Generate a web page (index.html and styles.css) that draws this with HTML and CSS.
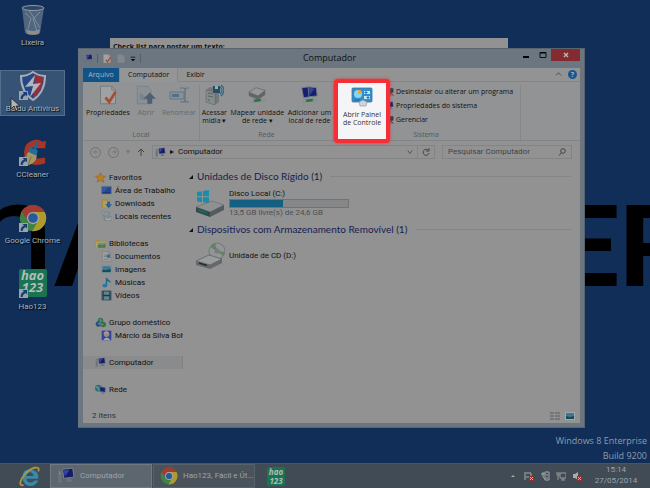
FILE: index.html
```html
<!DOCTYPE html>
<html lang="pt-BR">
<head>
<meta charset="utf-8">
<meta name="viewport" content="width=device-width, initial-scale=1">
<title>Computador</title>
<link rel="stylesheet" href="styles.css">
</head>
<body>
<svg class="defs" aria-hidden="true">
  <symbol id="pc" viewBox="0 0 16 16"><path d="M1 3h3v11H1z" fill="#68727a"/><path d="M2 5h1v1H2z" fill="#aab"/><path d="M5 2l9-1 1 8-9 1z" fill="#141b68" stroke="#7c868f" stroke-width=".8"/><path d="M6 3l5-.6-4 6.200z" fill="#3846a0"/><path d="M9 10h3l2 3H8z" fill="#6b747c"/></symbol>
  <symbol id="sheet" viewBox="0 0 16 16"><path d="M2 1h9l3 3v11H2z" fill="#a0a1a2" stroke="#6d7072" stroke-width=".6"/><path d="M11 1v3h3" fill="none" stroke="#6d7072" stroke-width=".6"/></symbol>
  <symbol id="props" viewBox="0 0 16 16"><use href="#sheet"/><path d="M6 10l3 3.500 5-8" fill="none" stroke="#a64d30" stroke-width="2.200"/></symbol>
  <symbol id="open" viewBox="0 0 16 16"><path d="M1 1h8l3 3v11H1z" fill="#8b9094" stroke="#737e88" stroke-width=".6"/><path d="M3 6l8 6H3z" fill="#79858e"/><path d="M11 6l5 5h-3v4H9v-4H6z" fill="#4f6073"/></symbol>
  <symbol id="rename" viewBox="0 0 20 16"><path d="M1 5h14v7H1z" fill="#87919a" stroke="#607487"/><path d="M3 7h7v3H3z" fill="#566d84"/><path d="M11 1h3q2 0 2 2v10q0 2-2 2h-3M20 1h-2q-2 0-2 2v10q0 2 2 2h2" fill="none" stroke="#5f7184" stroke-width="1.200"/></symbol>
  <symbol id="media" viewBox="0 0 20 20"><path d="M2 5l4-3 9 1v14l-4 3-9-3z" fill="#757878"/><path d="M2 5l9 2v13l-9-3z" fill="#888b8b" stroke="#5f6262" stroke-width=".5"/><path d="M4 8l5 1M4 11l5 1" stroke="#5d6161"/><circle cx="5" cy="15" r="1" fill="#4d8050"/><path d="M9 1h7v7H9z" fill="#234f69"/><path d="M11 1h3v3h-3z" fill="#9aa"/><path d="M16 2q4 3 0 7M17 0q6 5 0 11" fill="none" stroke="#26688b" stroke-width="1.200"/></symbol>
  <symbol id="netdrive" viewBox="0 0 22 20"><path d="M2 7l8-5 10 3-8 6z" fill="#949897" stroke="#5b5e60" stroke-width=".7"/><path d="M2 7v4l10 4V11zM12 11v4l8-5V5z" fill="#616567"/><path d="M7 15v3l9-1v-3z" fill="#247646"/><path d="M3 18l5-3v4zM15 15l5-1v3l-5 1z" fill="#87908a"/></symbol>
  <symbol id="netplace" viewBox="0 0 22 20"><path d="M3 2l8-1 1 11-7 1z" fill="#151e72" stroke="#747d87"/><path d="M10 1l9 1 1 9-9 1z" fill="#151e72" stroke="#747d87"/><path d="M11 2l6 1-5 7z" fill="#37479c"/><path d="M7 15v3l9-1v-3z" fill="#247646"/><path d="M2 18l6-3v4zM15 15l5-1v3l-5 1z" fill="#87908a"/></symbol>
  <symbol id="panel" viewBox="0 0 22 20"><rect x="1" y="1" width="20" height="14" rx="1" fill="#318fc9" stroke="#3f7599" stroke-width=".8"/><circle cx="7" cy="7" r="4" fill="#8bd4ef"/><path d="M7 3v4h4a4 4 0 0 0-4-4z" fill="#efaa37"/><path d="M13 4h6v3h-6zM13 9h6v3h-6z" fill="#c5e9f7"/><path d="M14 5h2v1h-2zM16 10h2v1h-2zM3 13h6" stroke="#166bae" fill="none"/><path d="M8 15l4-2 4 2-1 4H9z" fill="#cfd4d8" stroke="#8a9299" stroke-width=".6"/></symbol>
  <symbol id="tool" viewBox="0 0 16 16"><path d="M2 3h9v11H2z" fill="#777c80" stroke="#4c5154"/><path d="M4 6h5M4 9h5" stroke="#343a40"/><path d="M8 2h7v7H8z" fill="#33394d"/><path d="M10 8l5 6" stroke="#5a2f2f" stroke-width="1.500"/></symbol>
  <symbol id="star" viewBox="0 0 16 16"><path d="M8 1l2.200 4.800 5.100.5-3.900 3.400 1.200 5.100L8 12.200l-4.600 2.600 1.200-5.100L.7 6.300l5.100-.5z" fill="#b97f28" stroke="#875a1c" stroke-width=".7"/></symbol>
  <symbol id="desk" viewBox="0 0 16 16"><path d="M1 2h14v11H1z" fill="#234790" stroke="#6a7787"/><path d="M2 11h12v1H2z" fill="#142951"/><path d="M2 3h9l-7 7H2z" fill="#315ca4"/></symbol>
  <symbol id="folder" viewBox="0 0 16 16"><path d="M1 2h5l1 2h8v10H1z" fill="#a58b45"/><path d="M2 5h13l-1 9H1z" fill="#b4a264"/></symbol>
  <symbol id="down" viewBox="0 0 16 16"><path d="M1 1h10v13H1z" fill="#a58b45"/><path d="M3 4h9v10H3z" fill="#b1a061"/><path d="M9 5h4v4h3l-5 6-5-6h3z" fill="#20639a"/></symbol>
  <symbol id="recent" viewBox="0 0 16 16"><path d="M3 1h11v4h-2l2 9H4L2 5h1z" fill="#818b92"/><path d="M1 1h9v5H4zM6 8h9v6H6z" fill="#a0a5a8" stroke="#66727a" stroke-width=".6"/><path d="M4 3h4M8 10h5" stroke="#4b6775"/></symbol>
  <symbol id="library" viewBox="0 0 16 16"><use href="#folder"/><path d="M4 7h11v7H4z" fill="#61968f"/><path d="M4 11l3-2 3 2 5-3v6H4z" fill="#547b3b"/></symbol>
  <symbol id="doc" viewBox="0 0 16 16"><use href="#sheet"/><path d="M4 6h5M4 8h5M4 12h7" stroke="#666f77"/><path d="M9 5h4v5H9z" fill="#336b91"/></symbol>
  <symbol id="image" viewBox="0 0 16 16"><path d="M1 2h14v12H1z" fill="#a3a8aa" stroke="#6f777d" stroke-width=".6"/><path d="M2 3h12v9H2z" fill="#3f7892"/><path d="M2 8l5 1 7-2v5H2z" fill="#194b58"/></symbol>
  <symbol id="music" viewBox="0 0 16 16"><path d="M7 1h2c0 3 6 3 5 8-1-2-3-3-5-3v7H7z" fill="#216890"/><ellipse cx="5.500" cy="12.500" rx="3.500" ry="2.800" fill="#2878a5"/></symbol>
  <symbol id="video" viewBox="0 0 16 16"><path d="M1 1h14v14H1z" fill="#243642"/><path d="M4 2h8v5H4zM4 9h8v5H4z" fill="#5b8796"/><path d="M2.500 2v13M13.500 2v13" stroke="#91999d" stroke-dasharray="1.500"/></symbol>
  <symbol id="home" viewBox="0 0 16 16"><circle cx="8" cy="5" r="4" fill="#34784d"/><circle cx="5" cy="10" r="4" fill="#28517e"/><circle cx="12" cy="11" r="4" fill="#377248"/><path d="M7 3l2 3-4 4 7 1" stroke="#98a9a5" fill="none"/></symbol>
  <symbol id="user" viewBox="0 0 16 16"><path d="M1 1h14v14H1z" fill="#30469a"/><circle cx="8" cy="6" r="4" fill="#a2887f"/><path d="M3 15q5-8 11 0z" fill="#a3a4aa"/><path d="M3 5q6-7 9 1L8 4z" fill="#a9a9ac"/></symbol>
  <symbol id="net" viewBox="0 0 16 16"><circle cx="5" cy="6" r="5" fill="#2b7280"/><path d="M1 4q5 1 5 6" fill="none" stroke="#639278" stroke-width="2"/><path d="M7 4l8 1v7l-8-1z" fill="#172278" stroke="#7c8796" stroke-width=".7"/><path d="M10 12h3l1 2H9z" fill="#6a747d"/></symbol>
  <symbol id="drive" viewBox="0 0 30 28"><path d="M2 3l5-.7v5H2zM8 2l6-1v6.300H8zM2 8.300h5v5L2 12.500zM8 8.300h6v6l-6-1z" fill="#168fae"/><path d="M1 18l16-6 12 4-14 7z" fill="#8d9191" stroke="#656a6b" stroke-width=".6"/><path d="M1 18l14 5v5L1 23z" fill="#33494c"/><path d="M15 23l14-7v5l-14 7z" fill="#555c5e"/><path d="M3 20l9 3v2l-9-3z" fill="#21665e"/></symbol>
  <symbol id="cd" viewBox="0 0 30 28"><circle cx="22" cy="9" r="8" fill="#919595" stroke="#686d6d" stroke-width=".7"/><path d="M22 9l-7-4a8 8 0 0 1 5-4zM22 9l6 5a8 8 0 0 0 2-4z" fill="#648263"/><circle cx="22" cy="9" r="2.500" fill="#777c7c"/><path d="M1 19l13-6 13 4-12 6z" fill="#999c9c" stroke="#585c5d" stroke-width=".7"/><path d="M1 19l14 4v4L1 23zM15 23l12-6v4l-12 6z" fill="#64686a"/><path d="M4 21l8 2.500" stroke="#252b2d" stroke-width="1.500"/></symbol>
  <symbol id="chrome" viewBox="0 0 32 32"><circle cx="16" cy="16" r="15" fill="#3f8344"/><path d="M16 9h13.300A15 15 0 0 1 15 31l7-12z" fill="#b09a2b"/><path d="M3 8.500Q8 1 16 1t13.300 8H16a7 7 0 0 0-6.500 9z" fill="#a63931"/><circle cx="16" cy="16" r="7" fill="#a4a9a8"/><circle cx="16" cy="16" r="5.500" fill="#28599b"/></symbol>
  <symbol id="arrow" viewBox="0 0 10 10"><path d="M0 0h10v10H0z" fill="#9ba3aa"/><path d="M4 1h5v5L7.300 4.500Q4 6 4 9H2Q1 5 5.500 2.800z" fill="#183f78"/></symbol>
  <symbol id="bin" viewBox="0 0 24 30"><path d="M1 3l3 25q8 3 15 0l4-25z" fill="#66798b" opacity=".75"/><ellipse cx="12" cy="3" rx="11" ry="2.500" fill="#2f4764" stroke="#8e9ca9"/><path d="M4 8l6 5-3 11M19 7l-7 7 4 12M8 5l11 18" fill="none" stroke="#9ba9b3" opacity=".6"/><path d="M5 24q7 4 14 0l-1 5q-6 2-12 0z" fill="#9a9890" opacity=".8"/></symbol>
  <symbol id="shield" viewBox="0 0 26 30"><path d="M13 1q6 4 12 4 0 16-12 24Q1 21 1 5q6 0 12-4z" fill="#244887" stroke="#a7adb5" stroke-width="2"/><path d="M14 3q5 3 9 3 0 14-10 21l2-12z" fill="#982f38"/><path d="M15 4L5 16l8-1-3 11 11-14-8 1z" fill="#b0b5bc"/></symbol>
  <symbol id="cc" viewBox="0 0 30 30"><path d="M29 3l-1 8h-7q-9-3-10 5 1 8 9 6l8-1v6Q12 33 6 20 3 5 17 2q5-1 8 2z" fill="#a63626"/><path d="M19 4l-2 9" stroke="#256194" stroke-width="3"/><path d="M11 10l9 3-1 7-9-4z" fill="#236d9d"/><path d="M10 15l9 4q0 7-8 10L1 26q5-4 9-11z" fill="#a89566"/><path d="M9 18L5 27M13 20l-3 9" stroke="#796c49"/></symbol>
  <symbol id="ie" viewBox="0 0 24 24"><path d="M20 15H8q1 5 5 4 3 0 4-2h4q-3 6-9 6Q4 22 4 13T13 5t8 10zM8 12h8q-1-4-4-4t-4 4z" fill="#388aa9"/><path d="M21 7q2-5-4-4Q9 5 3 15q-4 8 2 7" fill="none" stroke="#aa9542" stroke-width="2"/></symbol>
</svg>

<main class="desktop">
  <div class="wallpaper" aria-hidden="true"><span class="em">m</span><span class="left">Á</span><span class="right">ER</span></div>

  <nav class="shortcuts" aria-label="Área de trabalho">
    <a href="#" class="shortcut"><span class="pic"><svg class="bin"><use href="#bin"/></svg></span><span>Lixeira</span></a>
    <a href="#" class="shortcut selected"><span class="pic"><svg><use href="#shield"/></svg><svg class="link"><use href="#arrow"/></svg></span><span>Baidu Antivirus</span></a>
    <a href="#" class="shortcut"><span class="pic"><svg><use href="#cc"/></svg><svg class="link"><use href="#arrow"/></svg></span><span>CCleaner</span></a>
    <a href="#" class="shortcut"><span class="pic"><svg><use href="#chrome"/></svg><svg class="link"><use href="#arrow"/></svg></span><span>Google Chrome</span></a>
    <a href="#" class="shortcut"><span class="pic"><span class="hao">hao<br>123</span><svg class="link"><use href="#arrow"/></svg></span><span>Hao123</span></a>
  </nav>
  <svg class="cursor" viewBox="0 0 10 15"><path d="M1 1v11l3-3 2 5 2-1-2-4h4z" fill="#b4b4b4" stroke="#222" stroke-width=".8"/></svg>

  <section class="note">Check list para postar um texto:</section>

  <section class="window" aria-label="Computador">
    <header class="titlebar">
      <div class="quick">
        <svg><use href="#pc"/></svg><i></i><svg><use href="#props"/></svg><svg class="faint"><use href="#sheet"/></svg><svg class="caret" viewBox="0 0 8 8"><path d="M1 1h6v1H1zM1 4h6L4 7z"/></svg><i></i>
      </div>
      <h1>Computador</h1>
      <div class="controls">
        <button aria-label="Minimizar"><svg viewBox="0 0 8 8"><path d="M1 5h6v2H1z"/></svg></button>
        <button aria-label="Maximizar"><svg viewBox="0 0 8 8"><path d="M1 1.500h6v5H1z" fill="none" stroke="#111"/><path d="M1 1h6v1.500H1z"/></svg></button>
        <button class="close" aria-label="Fechar"><svg viewBox="0 0 8 8"><path d="M2 2l4 4M6 2L2 6" stroke="#b8b8b8" stroke-width="1.400"/></svg></button>
      </div>
    </header>

    <div class="client">
      <div class="tabs">
        <button class="file">Arquivo</button><button class="active">Computador</button><button>Exibir</button>
        <span class="help"><svg viewBox="0 0 8 8"><path d="M1 5l3-3 3 3" fill="none" stroke="#444"/></svg><button aria-label="Ajuda">?</button></span>
      </div>

      <div class="ribbon">
        <section class="group local">
          <div class="tools">
            <button><svg><use href="#props"/></svg>Propriedades</button>
            <button class="off"><svg><use href="#open"/></svg>Abrir</button>
            <button class="off"><svg class="wide"><use href="#rename"/></svg>Renomear</button>
          </div>
          <h2>Local</h2>
        </section>
        <section class="group network">
          <div class="tools">
            <button><svg><use href="#media"/></svg>Acessar<br>mídia ▾</button>
            <button><svg><use href="#netdrive"/></svg>Mapear unidade<br>de rede ▾</button>
            <button><svg><use href="#netplace"/></svg>Adicionar um<br>local de rede</button>
          </div>
          <h2>Rede</h2>
        </section>
        <section class="group system">
          <button class="spot"><svg><use href="#panel"/></svg>Abrir Painel<br>de Controle</button>
          <div class="stack">
            <button><svg><use href="#tool"/></svg>Desinstalar ou alterar um programa</button>
            <button><svg><use href="#pc"/></svg>Propriedades do sistema</button>
            <button><svg><use href="#tool"/></svg>Gerenciar</button>
            <h2>Sistema</h2>
          </div>
        </section>
      </div>

      <div class="address">
        <button class="round" aria-label="Voltar"><svg viewBox="0 0 8 8"><path d="M7 4H1M4 1L1 4l3 3"/></svg></button>
        <button class="round" aria-label="Avançar"><svg viewBox="0 0 8 8"><path d="M1 4h6M4 1l3 3-3 3"/></svg></button>
        <span class="recent">▾</span>
        <button class="up" aria-label="Acima"><svg viewBox="0 0 8 8"><path d="M4 8V1M1 4l3-3 3 3"/></svg></button>
        <div class="path"><svg class="ico"><use href="#pc"/></svg><b>▸</b><span>Computador</span><svg class="drop" viewBox="0 0 8 8"><path d="M1 2l3 4 3-4"/></svg><button aria-label="Atualizar"><svg viewBox="0 0 8 8"><path d="M6.500 2.500A3 3 0 1 0 7 5M7 0v3H4"/></svg></button></div>
        <label class="search"><input type="text" placeholder="Pesquisar Computador" aria-label="Pesquisar Computador"><svg viewBox="0 0 8 8"><circle cx="5" cy="3" r="2.300"/><path d="M3.500 4.500L1 7.500"/></svg></label>
      </div>

      <div class="body">
        <nav class="tree" aria-label="Pastas">
          <ul><li><a href="#"><svg><use href="#star"/></svg>Favoritos</a></li><li class="sub"><a href="#"><svg><use href="#desk"/></svg>Área de Trabalho</a></li><li class="sub"><a href="#"><svg><use href="#down"/></svg>Downloads</a></li><li class="sub"><a href="#"><svg><use href="#recent"/></svg>Locais recentes</a></li></ul>
          <ul><li><a href="#"><svg><use href="#library"/></svg>Bibliotecas</a></li><li class="sub"><a href="#"><svg><use href="#doc"/></svg>Documentos</a></li><li class="sub"><a href="#"><svg><use href="#image"/></svg>Imagens</a></li><li class="sub"><a href="#"><svg><use href="#music"/></svg>Músicas</a></li><li class="sub"><a href="#"><svg><use href="#video"/></svg>Vídeos</a></li></ul>
          <ul><li><a href="#"><svg><use href="#home"/></svg>Grupo doméstico</a></li><li class="sub"><a href="#"><svg><use href="#user"/></svg>Márcio da Silva Bohn</a></li></ul>
          <ul><li class="current"><a href="#"><svg><use href="#pc"/></svg>Computador</a></li></ul>
          <ul><li><a href="#"><svg><use href="#net"/></svg>Rede</a></li></ul>
        </nav>
        <div class="files">
          <h2><i></i>Unidades de Disco Rígido (1)</h2>
          <article><svg><use href="#drive"/></svg><div><p>Disco Local (C:)</p><div class="meter"><span></span></div><p class="free">13,5 GB livre(s) de 24,6 GB</p></div></article>
          <h2><i></i>Dispositivos com Armazenamento Removível (1)</h2>
          <article><svg><use href="#cd"/></svg><div><p>Unidade de CD (D:)</p></div></article>
        </div>
      </div>

      <footer class="status"><span>2 itens</span><svg viewBox="0 0 10 8"><path d="M0 1h4M0 4h4M0 7h4M5 1h5M5 4h5M5 7h5" stroke="#555b60" fill="none"/></svg><svg viewBox="0 0 10 8"><path d="M0 0h10v8H0z" fill="#a3a8aa"/><path d="M1 1h8v6H1z" fill="#3f7892"/><path d="M1 4l4 1 4-1v3H1z" fill="#194b58"/></svg></footer>
    </div>
  </section>

  <div class="edition">Windows 8 Enterprise<br>Build 9200</div>

  <footer class="taskbar">
    <button class="launch" aria-label="Internet Explorer"><svg><use href="#ie"/></svg></button>
    <button class="task on"><svg><use href="#pc"/></svg><span>Computador</span></button>
    <button class="task"><svg><use href="#chrome"/></svg><span>Hao123, Fácil e Út...</span></button>
    <button class="launch"><span class="hao small">hao<br>123</span></button>
    <div class="tray">
      <svg viewBox="0 0 10 10"><path d="M3 6l2-2 2 2z" fill="#aaa"/></svg>
      <svg viewBox="0 0 10 10"><path d="M1 1v8M2 2h5v4H2" stroke="#aaa" fill="none"/><path d="M5 5h5v5H5z" fill="#9d2c24"/><path d="M6 6l3 3M9 6L6 9" stroke="#bbb"/></svg>
      <svg viewBox="0 0 10 10"><path d="M5 1h4v8H5zM1 3h4M3 1v5M3 6l2 2M6 4h2M6 7h2" stroke="#aaa" fill="none"/></svg>
      <svg viewBox="0 0 10 10"><path d="M4 2h6v5H4zM7 7v2M5 9h4M1 1v3h2V1M2 4v5" stroke="#999" fill="none"/></svg>
      <svg viewBox="0 0 10 10"><path d="M1 3h2l3-2v8L3 7H1z" fill="#aaa"/><path d="M5 5h5v5H5z" fill="#9d2c24"/><path d="M6 6l3 3M9 6L6 9" stroke="#bbb"/></svg>
    </div>
    <time>15:14<br>27/05/2014</time>
  </footer>
</main>
</body>
</html>
```

FILE: styles.css
```css
* { box-sizing: border-box; }
body { margin: 0; font: 8px/10px Roboto, "Noto Sans", sans-serif; color: #111; }
button { border: 0; padding: 0; margin: 0; background: none; font: inherit; color: inherit; }
a { color: inherit; text-decoration: none; }
h1, h2, p, ul { margin: 0; padding: 0; font-weight: 400; list-style: none; }
svg { display: block; flex: none; }
.defs { position: absolute; width: 0; height: 0; }

.desktop { position: relative; display: flex; flex-direction: column; justify-content: space-between; min-height: 100vh; overflow: hidden; background: #102e57; }
.wallpaper { position: absolute; inset: 0; color: #000; font: 700 114px/114px Roboto, sans-serif; }
.wallpaper span { position: absolute; top: 190px; white-space: nowrap; }
.wallpaper .em { left: -78px; top: 158px; font-size: 152px; line-height: 152px; font-weight: 400; }
.wallpaper .left { left: 54px; }
.wallpaper .right { left: calc(100% - 95px); }

.shortcuts { position: relative; display: flex; flex-direction: column; align-items: flex-start; gap: 20px; padding-top: 4px; color: #aab2bc; }
.shortcut { display: flex; flex-direction: column; align-items: center; gap: 3px; width: 65px; height: 46px; white-space: nowrap; border: 1px solid transparent; text-shadow: 1px 1px 1px #000; }
.shortcut.selected { background: #365376; border-color: #536d8b; }
.pic { position: relative; width: 28px; height: 30px; }
.pic > svg { width: 28px; height: 30px; }
.pic > .link { position: absolute; left: 0; bottom: 1px; width: 9px; height: 9px; }
.hao { display: block; width: 28px; height: 28px; border-radius: 2px; background: #197453; color: #b4bdb9; font: italic 700 13px/12px "Open Sans", sans-serif; text-align: center; text-shadow: none; }
.hao.small { width: 18px; height: 19px; font-size: 8px; line-height: 9px; }
.cursor { position: absolute; left: 10px; top: 97px; width: 10px; height: 15px; }

.note { position: absolute; left: 110px; right: 142px; top: 38px; height: 20px; padding: 4px 3px; overflow: hidden; background: #929292; font-family: "Open Sans", sans-serif; font-weight: 700; font-size: 7px; }

.window { position: absolute; inset: 48px 65px 60px 78px; display: flex; flex-direction: column; padding: 0 4px 4px 5px; background: #6c7680; border: 1px solid #59636e; border-width: 1px 1px 1px 0; }
.titlebar { position: relative; display: flex; justify-content: space-between; height: 19px; }
.titlebar h1 { flex: 1; text-align: center; font-family: "Open Sans", sans-serif; font-size: 9px; line-height: 18px; }
.quick { display: flex; align-items: center; gap: 4px; width: 76px; }
.quick svg { width: 10px; height: 11px; }
.quick .caret { width: 6px; height: 6px; }
.quick .faint { opacity: .4; }
.quick i { width: 1px; height: 9px; background: #555e67; }
.controls { display: flex; width: 80px; justify-content: flex-end; }
.controls button { display: grid; place-items: center; width: 17px; height: 12px; }
.controls .close { width: 29px; background: #842b2f; }
.controls svg { width: 8px; height: 8px; }

.client { flex: 1; display: flex; flex-direction: column; min-height: 0; background: #929292; }
.tabs { display: flex; align-items: stretch; height: 14px; background: #939393; border-bottom: 1px solid #858687; font-family: "Open Sans", sans-serif; font-size: 7px; }
.tabs button { padding: 0 8px; height: 14px; }
.tabs .file { width: 36px; padding: 0; background: #115386; color: #a9b8c4; }
.tabs .active { background: #949596; border: solid #858687; border-width: 0 1px; }
.help { display: flex; align-items: center; gap: 6px; margin-left: auto; padding-right: 3px; }
.help svg { width: 7px; height: 7px; }
.tabs .help button { width: 9px; height: 9px; padding: 0; border-radius: 50%; background: #165693; color: #b0b8c0; line-height: 9px; font-weight: 700; }

.ribbon { display: flex; height: 59px; background: #929394; border-bottom: 1px solid #838485; font-family: "Open Sans", sans-serif; }
.group { display: flex; flex-direction: column; justify-content: space-between; border-right: 1px solid #868788; margin: 3px 0 0; }
.group h2 { text-align: center; font-size: 7px; line-height: 10px; color: #55585b; }
.tools { display: flex; justify-content: space-around; white-space: nowrap; }
.tools button, .spot { display: flex; flex-direction: column; align-items: center; gap: 4px; font-size: 7px; line-height: 8px; }
.tools svg { width: 20px; height: 20px; }
.spot svg { width: 22px; height: 20px; }
.local { width: 117px; }
.network { width: 134px; }
.off { color: #66696c; }
.system { flex-direction: row; border: 0; justify-content: flex-start; }
.spot { position: relative; z-index: 1; width: 56px; height: 64px; margin: -6px 0 -8px; padding-top: 4px; white-space: nowrap; border: 4px solid #f52f35; border-radius: 4px; background: #f5f5f7; box-shadow: 0 0 3px #f52f35; color: #333; }
.stack { display: flex; flex-direction: column; margin-left: -6px; padding-right: 7px; border-right: 1px solid #868788; }
.stack button { display: flex; align-items: center; gap: 2px; height: 14px; font-size: 7px; white-space: nowrap; }
.stack svg { width: 10px; height: 10px; }
.stack h2 { margin-top: auto; padding-right: 45px; }

.address { display: flex; align-items: center; gap: 7px; height: 22px; padding: 0 8px 0 7px; }
.address svg { fill: none; stroke: #444; width: 8px; height: 8px; }
.address .ico { stroke: none; width: 11px; height: 11px; }
.round { display: grid; place-items: center; width: 11px; height: 11px; border: 1px solid #707172; border-radius: 50%; }
.round svg { width: 6px; height: 6px; stroke: #707172; }
.recent { width: 4px; color: #777; }
.path { flex: 1; display: flex; align-items: center; gap: 4px; height: 14px; padding-left: 2px; border: 1px solid #838485; }
.path b { font-weight: 400; }
.path .drop { margin-left: auto; width: 6px; }
.path button { display: grid; place-items: center; width: 17px; height: 12px; border-left: 1px solid #838485; }
.search { display: flex; align-items: center; width: 130px; height: 14px; padding: 0 5px; border: 1px solid #838485; }
.search input { flex: 1; min-width: 0; padding: 0; border: 0; background: none; font: inherit; outline: 0; }
.search input::placeholder { color: #414447; opacity: 1; }

.body { flex: 1; display: flex; min-height: 0; padding-top: 7px; }
.tree { display: flex; flex-direction: column; gap: 14px; width: 100px; padding-top: 1px; overflow: hidden; }
.tree a { display: flex; align-items: center; gap: 3px; height: 13px; padding-left: 12px; white-space: nowrap; }
.tree .sub a { padding-left: 18px; }
.tree svg { width: 11px; height: 11px; }
.current { background: #8a8b8c; border-right: 1px solid #808182; }
.files { flex: 1; padding: 0 8px 0 6px; }
.files h2 { display: flex; align-items: center; gap: 4px; height: 13px; font-family: Lato, sans-serif; font-size: 10px; line-height: 13px; color: #17204e; white-space: nowrap; }
.files h2::after { content: ""; flex: 1; height: 1px; margin-left: 4px; background: #858687; }
.files h2 i { width: 0; height: 0; border: 2px solid transparent; border-right-color: #111; border-bottom-color: #111; }
.files article { display: flex; align-items: center; gap: 4px; height: 40px; padding-left: 6px; }
.files article svg { width: 30px; height: 28px; }
.meter { width: 120px; height: 9px; border: 1px solid #717273; background: #868788; }
.meter span { display: block; width: 45%; height: 100%; background: #155f83; }
.free { color: #4c4f52; }

.status { display: flex; align-items: center; gap: 5px; height: 14px; padding: 0 5px 0 9px; color: #2e3338; }
.status span { margin-right: auto; }
.status svg { width: 10px; height: 8px; }

.edition { position: absolute; right: 3px; bottom: 25px; text-align: right; font-family: "Open Sans", sans-serif; font-size: 9px; line-height: 15px; color: #8e9cac; }
.taskbar { position: relative; display: flex; align-items: stretch; height: 25px; padding-left: 10px; background: #414b55; border-top: 1px solid #4a5560; color: #9da4aa; }
.launch { display: grid; place-items: center; width: 40px; }
.launch svg { width: 22px; height: 22px; }
.task { display: flex; align-items: center; gap: 5px; width: 102px; margin-right: 1px; padding-left: 6px; border: 1px solid #57616b; background: #4a535c; white-space: nowrap; }
.task.on { background: #5d666f; border-color: #707980; }
.task svg { width: 18px; height: 18px; }
.tray { display: flex; align-items: center; gap: 6px; margin-left: auto; }
.tray svg { width: 10px; height: 10px; }
.taskbar time { width: 68px; text-align: center; line-height: 11px; }
```
